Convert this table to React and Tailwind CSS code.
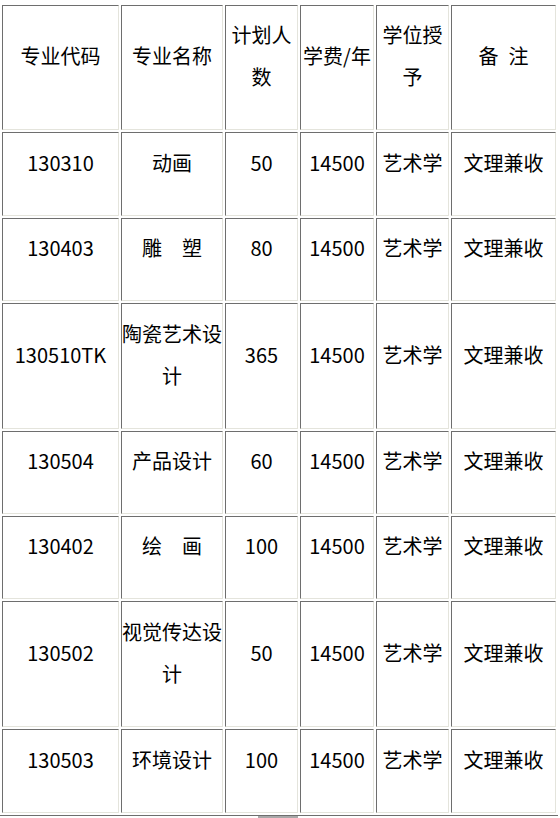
import React from "react";

const rows = [
  { code: "130310", name: "动画", num: "50", h: "h-[84px]" },
  { code: "130403", name: "雕\u3000塑", num: "80", h: "h-[83px]" },
  { code: "130510TK", name: "陶瓷艺术设计", num: "365", h: "h-[126px]" },
  { code: "130504", name: "产品设计", num: "60", h: "h-[83px]" },
  { code: "130402", name: "绘\u3000画", num: "100", h: "h-[83px]" },
  { code: "130502", name: "视觉传达设计", num: "50", h: "h-[126px]" },
  { code: "130503", name: "环境设计", num: "100", h: "h-[84px]" },
];

const cell =
  "border border-t-[#6e6e6e] border-l-[#6e6e6e] border-r-[#e4e4dc] border-b-[#e4e4dc] p-0 pb-[23px] text-center align-middle leading-[42px] break-all";

const App = () => {
  return (
    <div className="w-[560px] h-[818px] overflow-hidden bg-white pt-[3px] text-[20px] text-black font-['Noto_Sans_CJK_SC','Noto_Sans',sans-serif]">
      <table className="table-fixed w-[558px] border-separate border-spacing-[2px] border-b border-b-[#6e6e6e]">
        <colgroup>
          <col className="w-[117px]" />
          <col className="w-[102px]" />
          <col className="w-[73px]" />
          <col className="w-[74px]" />
          <col className="w-[73px]" />
          <col className="w-[105px]" />
        </colgroup>
        <tbody>
          <tr className="h-[125px]">
            <td className={cell}>专业代码</td>
            <td className={cell}>专业名称</td>
            <td className={cell}>计划人数</td>
            <td className={cell}>学费/年</td>
            <td className={cell}>学位授予</td>
            <td className={cell}>备{"\u2002"}注</td>
          </tr>
          {rows.map((row, index) => (
            <tr key={index} className={row.h}>
              <td className={cell}>{row.code}</td>
              <td className={cell}>{row.name}</td>
              <td className={cell}>{row.num}</td>
              <td className={cell}>14500</td>
              <td className={cell}>艺术学</td>
              <td className={cell}>文理兼收</td>
            </tr>
          ))}
        </tbody>
      </table>
      <div className="ml-[258px] w-[40px] h-[2px] bg-[#a8a8a8]" />
    </div>
  );
};

export default App;
